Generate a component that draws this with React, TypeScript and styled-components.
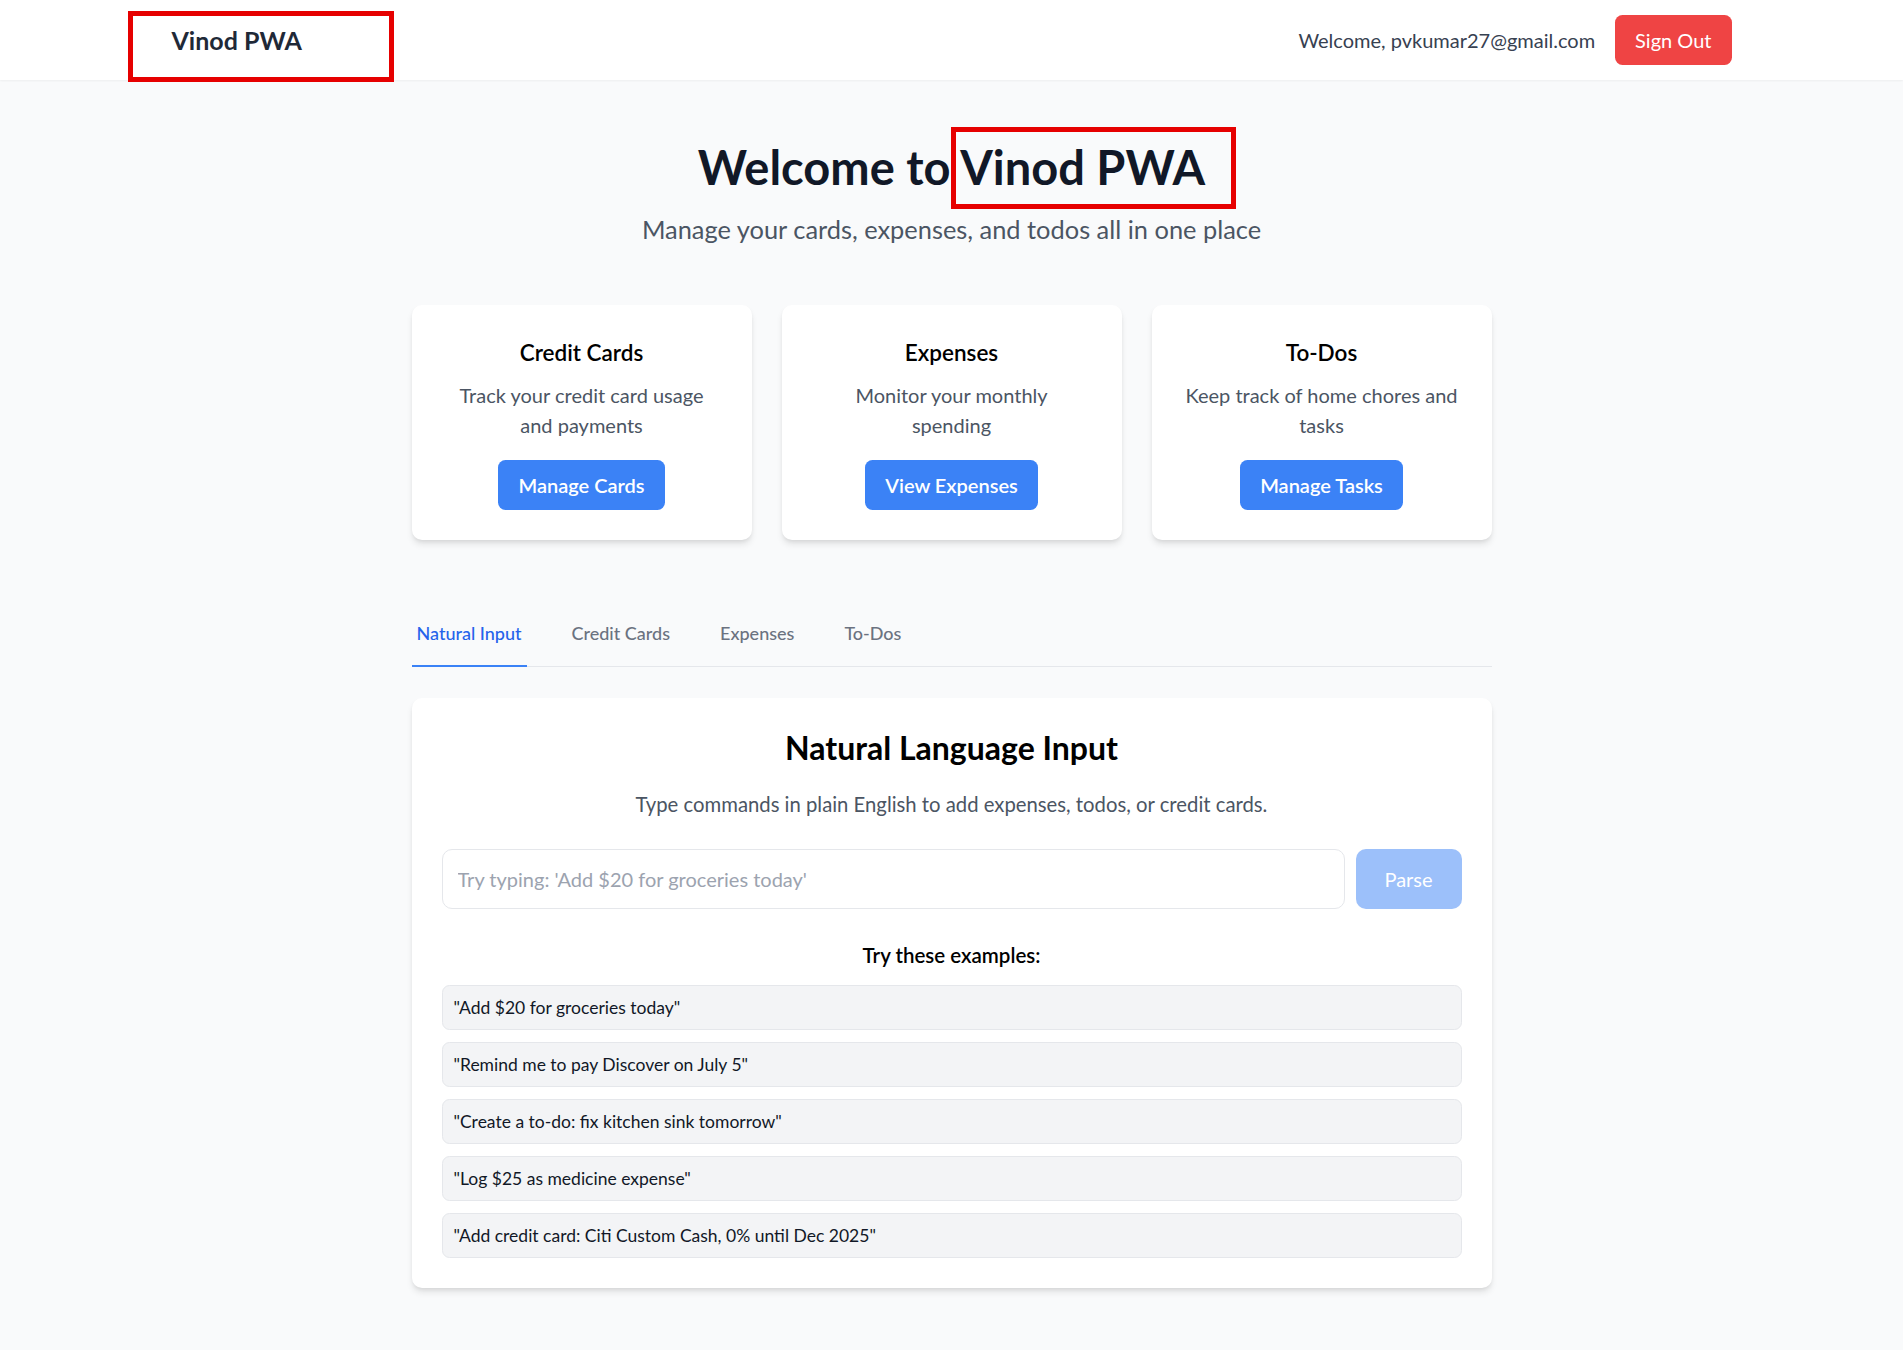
import React from 'react';
import styled, { createGlobalStyle } from 'styled-components';

const GlobalStyle = createGlobalStyle`
  * {
    box-sizing: border-box;
  }

  body {
    margin: 0;
    background: #f9fafb;
    font-family: Lato, 'Liberation Sans', sans-serif;
    color: #111827;
  }
`;

const Page = styled.div`
  min-height: 100vh;
  background: #f9fafb;
`;

const Header = styled.header`
  height: 80px;
  background: #ffffff;
  box-shadow: 0 1px 2px rgba(0, 0, 0, 0.05);
`;

const HeaderInner = styled.div`
  max-width: 1600px;
  height: 100%;
  margin: 0 auto;
  padding: 0 20px;
  display: flex;
  align-items: center;
  justify-content: space-between;
`;

const Brand = styled.div`
  position: relative;
  font-size: 25px;
  line-height: 35px;
  font-weight: 700;
  color: #1f2937;
`;

// red highlight boxes drawn over the screenshot
const Marker = styled.span<{ $top: number; $left: number; $width: number; $height: number }>`
  position: absolute;
  top: ${p => p.$top}px;
  left: ${p => p.$left}px;
  width: ${p => p.$width}px;
  height: ${p => p.$height}px;
  border: 5px solid #e60000;
  pointer-events: none;
`;

const UserArea = styled.div`
  display: flex;
  align-items: center;
  gap: 20px;
`;

const UserText = styled.span`
  font-size: 20px;
  line-height: 30px;
  color: #374151;
`;

const SignOutButton = styled.button`
  border: none;
  background: #ef4444;
  color: #ffffff;
  font-family: inherit;
  font-size: 20px;
  line-height: 30px;
  padding: 10px 20px;
  border-radius: 7.5px;
  cursor: pointer;
`;

const Main = styled.main`
  max-width: 1120px;
  margin: 0 auto;
  padding: 62px 20px 60px;
`;

const Hero = styled.section`
  text-align: center;
  margin-bottom: 58px;
`;

const HeroTitle = styled.h1`
  margin: 0 0 20px;
  font-size: 47px;
  line-height: 50px;
  font-weight: 700;
  color: #111827;
`;

const Highlight = styled.span`
  position: relative;
`;

const HeroSubtitle = styled.p`
  margin: 0;
  font-size: 25.4px;
  line-height: 35px;
  color: #4b5563;
`;

const CardGrid = styled.div`
  display: grid;
  grid-template-columns: repeat(3, 1fr);
  gap: 30px;
  margin-bottom: 60px;
`;

const Card = styled.div`
  background: #ffffff;
  border-radius: 10px;
  padding: 30px;
  text-align: center;
  box-shadow: 0 5px 7.5px -1.25px rgba(0, 0, 0, 0.1), 0 2.5px 5px -2.5px rgba(0, 0, 0, 0.1);
`;

const CardTitle = styled.h3`
  margin: 0 0 10px;
  font-size: 22.5px;
  line-height: 35px;
  font-weight: 600;
  color: #000000;
`;

const CardText = styled.p`
  max-width: 275px;
  margin: 0 auto 20px;
  font-size: 20px;
  line-height: 30px;
  color: #4b5563;
`;

const PrimaryButton = styled.button`
  border: none;
  background: #3b82f6;
  color: #ffffff;
  font-family: inherit;
  font-size: 20px;
  line-height: 30px;
  font-weight: 600;
  padding: 10px 20px;
  border-radius: 7.5px;
  cursor: pointer;
`;

const TabList = styled.nav`
  display: flex;
  gap: 40px;
  border-bottom: 1px solid #e5e7eb;
`;

const Tab = styled.button<{ $active?: boolean }>`
  border: none;
  background: none;
  font-family: inherit;
  font-size: 18px;
  line-height: 25px;
  font-weight: 500;
  padding: 21px 5px 19px;
  margin-bottom: -1px;
  border-bottom: 2.5px solid ${p => (p.$active ? '#3b82f6' : 'transparent')};
  color: ${p => (p.$active ? '#2563eb' : '#6b7280')};
  cursor: pointer;
`;

const Panel = styled.section`
  margin-top: 31px;
  background: #ffffff;
  border-radius: 10px;
  padding: 30px;
  box-shadow: 0 5px 7.5px -1.25px rgba(0, 0, 0, 0.1), 0 2.5px 5px -2.5px rgba(0, 0, 0, 0.1);
`;

const PanelTitle = styled.h2`
  margin: 0 0 21px;
  text-align: center;
  font-size: 32px;
  line-height: 40px;
  font-weight: 700;
  color: #000000;
`;

const PanelText = styled.p`
  margin: 0 0 30px;
  text-align: center;
  font-size: 20.3px;
  line-height: 30px;
  color: #4b5563;
`;

const InputRow = styled.div`
  display: flex;
  gap: 11px;
  margin-bottom: 31px;
`;

const CommandInput = styled.input`
  flex: 1;
  height: 60px;
  padding: 0 15px;
  border: 1px solid #e5e7eb;
  border-radius: 10px;
  font-family: inherit;
  font-size: 20px;
  color: #111827;
  outline: none;

  &::placeholder {
    color: #9ca3af;
  }
`;

const ParseButton = styled.button`
  width: 106px;
  height: 60px;
  border: none;
  border-radius: 10px;
  background: #3b82f6;
  opacity: 0.5;
  color: #ffffff;
  font-family: inherit;
  font-size: 20px;
`;

const ExamplesTitle = styled.h3`
  margin: 0 0 15px;
  text-align: center;
  font-size: 20.5px;
  line-height: 30px;
  font-weight: 600;
  color: #000000;
`;

const ExampleList = styled.div`
  display: flex;
  flex-direction: column;
  gap: 12px;
`;

const ExampleItem = styled.div`
  background: #f3f4f6;
  border: 1px solid #e5e7eb;
  border-radius: 7.5px;
  padding: 9px 11px;
  font-size: 17.5px;
  line-height: 25px;
  color: #111827;
`;

const features = [
  { title: 'Credit Cards', text: 'Track your credit card usage and payments', action: 'Manage Cards' },
  { title: 'Expenses', text: 'Monitor your monthly spending', action: 'View Expenses' },
  { title: 'To-Dos', text: 'Keep track of home chores and tasks', action: 'Manage Tasks' },
];

const tabs = ['Natural Input', 'Credit Cards', 'Expenses', 'To-Dos'];

const examples = [
  '"Add $20 for groceries today"',
  '"Remind me to pay Discover on July 5"',
  '"Create a to-do: fix kitchen sink tomorrow"',
  '"Log $25 as medicine expense"',
  '"Add credit card: Citi Custom Cash, 0% until Dec 2025"',
];

const App = () => {
  return (
    <Page>
      <GlobalStyle />
      <Header>
        <HeaderInner>
          <Brand>
            Vinod PWA
            <Marker $top={-11.5} $left={-44} $width={266} $height={71} />
          </Brand>
          <UserArea>
            <UserText>Welcome, pvkumar27@gmail.com</UserText>
            <SignOutButton>Sign Out</SignOutButton>
          </UserArea>
        </HeaderInner>
      </Header>
      <Main>
        <Hero>
          <HeroTitle>
            Welcome to{' '}
            <Highlight>
              Vinod PWA
              <Marker $top={-12} $left={-9} $width={285} $height={82} />
            </Highlight>
          </HeroTitle>
          <HeroSubtitle>Manage your cards, expenses, and todos all in one place</HeroSubtitle>
        </Hero>
        <CardGrid>
          {features.map(f => (
            <Card key={f.title}>
              <CardTitle>{f.title}</CardTitle>
              <CardText>{f.text}</CardText>
              <PrimaryButton>{f.action}</PrimaryButton>
            </Card>
          ))}
        </CardGrid>
        <TabList>
          {tabs.map((t, i) => (
            <Tab key={t} $active={i === 0}>{t}</Tab>
          ))}
        </TabList>
        <Panel>
          <PanelTitle>Natural Language Input</PanelTitle>
          <PanelText>Type commands in plain English to add expenses, todos, or credit cards.</PanelText>
          <InputRow>
            <CommandInput placeholder="Try typing: 'Add $20 for groceries today'" />
            <ParseButton disabled>Parse</ParseButton>
          </InputRow>
          <ExamplesTitle>Try these examples:</ExamplesTitle>
          <ExampleList>
            {examples.map(e => (
              <ExampleItem key={e}>{e}</ExampleItem>
            ))}
          </ExampleList>
        </Panel>
      </Main>
    </Page>
  );
};

export default App;
